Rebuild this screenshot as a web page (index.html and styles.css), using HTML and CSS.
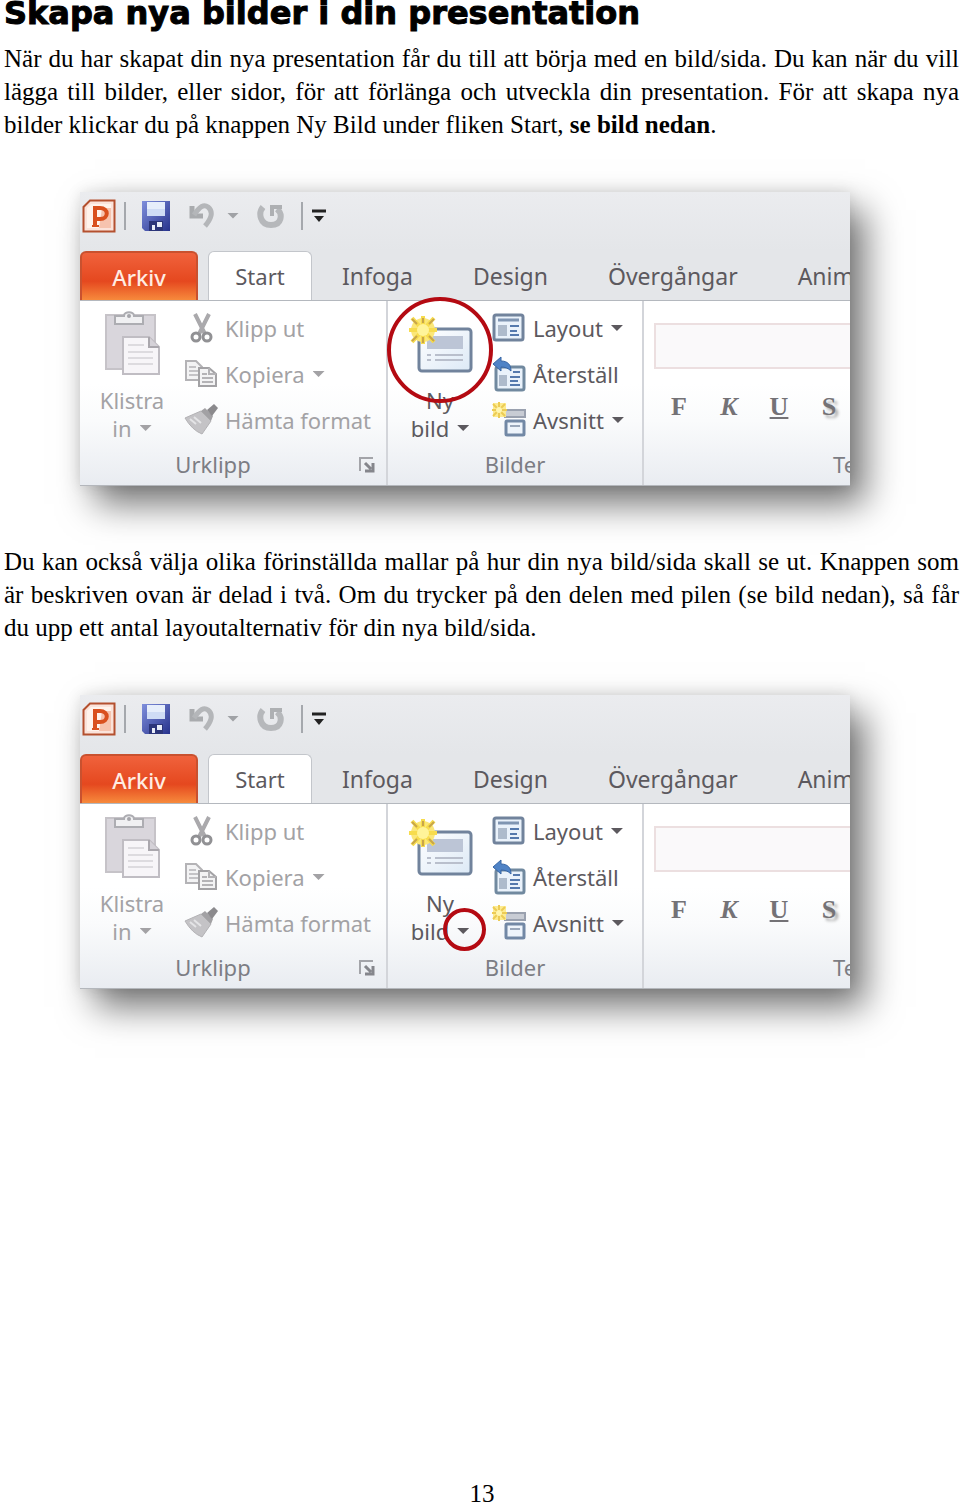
FILE: index.html
```html
<!DOCTYPE html>
<html lang="sv">
<head>
  <meta charset="UTF-8">
  <title>Skapa nya bilder i din presentation</title>
  <link rel="stylesheet" href="styles.css">
</head>
<body>
  <!-- Ikoner som delas av båda bilderna -->
  <svg class="sprite" aria-hidden="true">
    <defs>
      <linearGradient id="blue" x1="0" y1="0" x2="1" y2="1">
        <stop offset="0" stop-color="#7f8fdc"/><stop offset="1" stop-color="#27328c"/>
      </linearGradient>
      <linearGradient id="slide" x1="0" y1="0" x2="1" y2="1">
        <stop offset="0" stop-color="#ffffff"/><stop offset="1" stop-color="#dce9f6"/>
      </linearGradient>
    </defs>
    <symbol id="i-app" viewBox="0 0 34 34">
      <path d="M8 1.500H32.500V32.500H1.500V8Z" fill="#fbe3da" stroke="#b4502f" stroke-width="2"/>
      <path d="M9 5H29V29H5V9Z" fill="#fff3ec"/>
      <path d="M20 9H29V29H17Z" fill="#f6c3ae"/>
      <path d="M13 27V9H18C27 9 27 20 18 20H14" fill="none" stroke="#d9501e" stroke-width="4"/>
      <path d="M10 27H17" stroke="#d9501e" stroke-width="2"/>
    </symbol>
    <symbol id="i-save" viewBox="0 0 30 32">
      <path d="M1 1H29V31H4L1 28Z" fill="url(#blue)"/>
      <path d="M6 2H24V16H6Z" fill="#e6eefb"/>
      <path d="M6 9H24V16H6Z" fill="#cfdcf5"/>
      <path d="M8 21H22V31H8Z" fill="#2c3579"/>
      <path d="M11 25H14V30H11ZM16 22H21V27H16Z" fill="#e8ecf8"/>
    </symbol>
    <symbol id="i-undo" viewBox="0 0 26 28">
      <path d="M3 4V14H14" fill="none" stroke="#a9abae" stroke-width="5"/>
      <path d="M5 13C11 4 15 2 19 5C25 10 22 17 16 24" fill="none" stroke="#b4b6b9" stroke-width="5"/>
    </symbol>
    <symbol id="i-redo" viewBox="0 0 28 28">
      <path d="M6 5C1 11 3 23 14 23C25 23 26 12 20 7" fill="none" stroke="#b6b8bb" stroke-width="6"/>
      <path d="M15 14V5H25" fill="none" stroke="#aeb0b3" stroke-width="4"/>
    </symbol>
    <symbol id="i-more" viewBox="0 0 16 14">
      <path d="M1 2H15" stroke="#222" stroke-width="3"/><path d="M3 7H13L8 13Z" fill="#222"/>
    </symbol>
    <symbol id="i-paste" viewBox="0 0 58 66">
      <path d="M3 5H52V59H3Z" fill="#d9d6dc" stroke="#c6c3c8" stroke-width="2"/>
      <path d="M12 14V6H21C21 1 31 1 31 6H40V14Z" fill="#f0f0f2" stroke="#adadb2" stroke-width="2"/>
      <circle cx="26" cy="6" r="2" fill="#a5a5aa"/>
      <path d="M20 27H46L56 37V64H20Z" fill="#f7f5f8" stroke="#c0bdc3" stroke-width="2"/>
      <path d="M46 27V37H56" fill="#d5d2d8" stroke="#aaa7ad" stroke-width="2"/>
      <path d="M25 35H41M25 42H50M25 48H50M25 54H50" stroke="#dddbdf" stroke-width="2"/>
    </symbol>
    <symbol id="i-cut" viewBox="0 0 34 34">
      <path d="M11 3L21 23M25 3L15 23" stroke="#aaa9ac" stroke-width="4"/>
      <circle cx="12" cy="26" r="4" fill="none" stroke="#919194" stroke-width="3"/>
      <circle cx="23" cy="26" r="4" fill="none" stroke="#919194" stroke-width="3"/>
    </symbol>
    <symbol id="i-copy" viewBox="0 0 34 34">
      <path d="M2 4H12L18 10V23H2Z" fill="#f3f3f4" stroke="#b4b3b6" stroke-width="2"/>
      <path d="M5 10H12M5 14H14M5 18H14" stroke="#c4c3c6" stroke-width="2"/>
      <path d="M15 11H25L32 17V29H15Z" fill="#f3f3f4" stroke="#a3a2a5" stroke-width="2"/>
      <path d="M25 11V17H32M18 17H23M18 21H29M18 25H29" fill="none" stroke="#b4b3b6" stroke-width="2"/>
    </symbol>
    <symbol id="i-brush" viewBox="0 0 34 34">
      <path d="M1 15L17 8L27 18L18 31Q8 27 1 15Z" fill="#c4c3c6" stroke="#b3b2b5" stroke-width="1"/>
      <path d="M6 16L12 21M10 14L17 20" stroke="#e4e4e6" stroke-width="2"/>
      <path d="M17 8L21 5L29 13L27 18Z" fill="#a2a1a4"/>
      <path d="M23 7L30 1L34 5L28 13Z" fill="#8b8a8d"/>
    </symbol>
    <symbol id="i-new" viewBox="0 0 66 62">
      <rect x="12" y="15" width="52" height="42" rx="3" fill="url(#slide)" stroke="#71839c" stroke-width="3"/>
      <path d="M20 22H56V35H20Z" fill="#bcc5d6"/>
      <path d="M20 41H24M28 41H56M20 46H24M28 46H56" stroke="#b9bfcc" stroke-width="2"/>
      <circle cx="16" cy="16" r="12" fill="#fbe77a"/>
      <path d="M16 2V30M2 16H30M5 4L27 28M27 4L5 28" stroke="#f7dc4e" stroke-width="4"/>
      <path d="M16 4V9M5 5L10 10M27 5L22 10M16 23V29M5 27L10 22M27 27L22 22" stroke="#c8a54a" stroke-width="2"/>
      <circle cx="16" cy="16" r="6" fill="#fff49a"/>
    </symbol>
    <symbol id="i-layout" viewBox="0 0 34 30">
      <rect x="2" y="2" width="29" height="25" rx="2" fill="#eaf2fb" stroke="#71839c" stroke-width="3"/>
      <path d="M6 7H27" stroke="#7f95b2" stroke-width="3"/>
      <path d="M6 12H15V23H6Z" fill="#aebbcc"/>
      <path d="M18 13H27M18 18H25M18 22H27" stroke="#5579ad" stroke-width="2"/>
    </symbol>
    <symbol id="i-reset" viewBox="0 0 34 36">
      <rect x="4" y="11" width="28" height="23" rx="2" fill="#eaf2fb" stroke="#71899f" stroke-width="3"/>
      <path d="M7 19H15V30H7Z" fill="#aebbcc"/>
      <path d="M21 16H28M18 21H28M18 25H26M18 29H28" stroke="#5579ad" stroke-width="2"/>
      <path d="M1 8L9 1V5C16 5 19 9 19 15C16 12 13 11 9 11V15Z" fill="#4f83c6" stroke="#3866a5"/>
    </symbol>
    <symbol id="i-section" viewBox="0 0 34 36">
      <rect x="13" y="8" width="20" height="7" fill="#c8ccd4" stroke="#9aa1af" stroke-width="2"/>
      <rect x="14" y="19" width="18" height="14" rx="1" fill="#eef4fb" stroke="#7288a5" stroke-width="3"/>
      <path d="M18 24H28" stroke="#9aa7ba" stroke-width="2"/>
      <path d="M1 1H14V15H1Z" fill="#fdeb90"/>
      <path d="M7 0V16M0 8H15M1 2L13 14M13 2L1 14" stroke="#eccb55" stroke-width="2"/>
      <circle cx="7" cy="8" r="3" fill="#fff6b0"/>
    </symbol>
    <symbol id="i-launch" viewBox="0 0 18 18">
      <path d="M2 15V2H15" fill="none" stroke="#a3a4a9" stroke-width="2"/>
      <path d="M7 7L13 13M15 7V15H7" fill="none" stroke="#85868c" stroke-width="3"/>
    </symbol>
  </svg>

  <main>
    <h1>Skapa nya bilder i din presentation</h1>
    <p>När du har skapat din nya presentation får du till att börja med en bild/sida. Du kan när du vill lägga till bilder, eller sidor, för att förlänga och utveckla din presentation. För att skapa nya bilder klickar du på knappen Ny Bild under fliken Start, <b>se bild nedan</b>.</p>

    <figure class="ribbon">
      <div class="quick">
        <button class="app" aria-label="PowerPoint"><svg width="34" height="34"><use href="#i-app"/></svg></button>
        <span class="sep"></span>
        <button class="save" aria-label="Spara"><svg width="30" height="32"><use href="#i-save"/></svg></button>
        <button class="undo" aria-label="Ångra"><svg width="26" height="28"><use href="#i-undo"/></svg><i class="arrow"></i></button>
        <button class="redo" aria-label="Gör om"><svg width="28" height="28"><use href="#i-redo"/></svg></button>
        <span class="sep"></span>
        <button class="more" aria-label="Anpassa"><svg width="16" height="14"><use href="#i-more"/></svg></button>
      </div>
      <nav class="tabs">
        <button class="tab file">Arkiv</button>
        <button class="tab active">Start</button>
        <button class="tab">Infoga</button>
        <button class="tab">Design</button>
        <button class="tab">Övergångar</button>
        <button class="tab">Anim</button>
      </nav>
      <div class="groups">
        <section class="group clipboard">
          <div class="tools">
            <button class="big dim"><svg width="58" height="66"><use href="#i-paste"/></svg><span>Klistra</span><span>in<i class="arrow"></i></span></button>
            <div class="list dim">
              <button><svg width="34" height="34"><use href="#i-cut"/></svg>Klipp ut</button>
              <button><svg width="34" height="34"><use href="#i-copy"/></svg>Kopiera<i class="arrow"></i></button>
              <button><svg width="34" height="34"><use href="#i-brush"/></svg>Hämta format</button>
            </div>
          </div>
          <div class="name">Urklipp<button class="launch" aria-label="Visa Urklipp"><svg width="18" height="18"><use href="#i-launch"/></svg></button></div>
        </section>
        <section class="group slides">
          <div class="tools">
            <button class="big"><svg width="66" height="62"><use href="#i-new"/></svg><span>Ny</span><span>bild<i class="arrow"></i></span><span class="ring ring-icon"></span></button>
            <div class="list">
              <button><svg width="34" height="30"><use href="#i-layout"/></svg>Layout<i class="arrow"></i></button>
              <button><svg width="34" height="36"><use href="#i-reset"/></svg>Återställ</button>
              <button><svg width="34" height="36"><use href="#i-section"/></svg>Avsnitt<i class="arrow"></i></button>
            </div>
          </div>
          <div class="name">Bilder</div>
        </section>
        <section class="group font">
          <div class="tools">
            <input type="text" aria-label="Teckensnitt">
            <div class="format">
              <button><b>F</b></button>
              <button><em>K</em></button>
              <button><u>U</u></button>
              <button class="shadow">S</button>
            </div>
          </div>
          <div class="name">Te</div>
        </section>
      </div>
    </figure>

    <p>Du kan också välja olika förinställda mallar på hur din nya bild/sida skall se ut. Knappen som är beskriven ovan är delad i två. Om du trycker på den delen med pilen (se bild nedan), så får du upp ett antal layoutalternativ för din nya bild/sida.</p>

    <figure class="ribbon">
      <div class="quick">
        <button class="app" aria-label="PowerPoint"><svg width="34" height="34"><use href="#i-app"/></svg></button>
        <span class="sep"></span>
        <button class="save" aria-label="Spara"><svg width="30" height="32"><use href="#i-save"/></svg></button>
        <button class="undo" aria-label="Ångra"><svg width="26" height="28"><use href="#i-undo"/></svg><i class="arrow"></i></button>
        <button class="redo" aria-label="Gör om"><svg width="28" height="28"><use href="#i-redo"/></svg></button>
        <span class="sep"></span>
        <button class="more" aria-label="Anpassa"><svg width="16" height="14"><use href="#i-more"/></svg></button>
      </div>
      <nav class="tabs">
        <button class="tab file">Arkiv</button>
        <button class="tab active">Start</button>
        <button class="tab">Infoga</button>
        <button class="tab">Design</button>
        <button class="tab">Övergångar</button>
        <button class="tab">Anim</button>
      </nav>
      <div class="groups">
        <section class="group clipboard">
          <div class="tools">
            <button class="big dim"><svg width="58" height="66"><use href="#i-paste"/></svg><span>Klistra</span><span>in<i class="arrow"></i></span></button>
            <div class="list dim">
              <button><svg width="34" height="34"><use href="#i-cut"/></svg>Klipp ut</button>
              <button><svg width="34" height="34"><use href="#i-copy"/></svg>Kopiera<i class="arrow"></i></button>
              <button><svg width="34" height="34"><use href="#i-brush"/></svg>Hämta format</button>
            </div>
          </div>
          <div class="name">Urklipp<button class="launch" aria-label="Visa Urklipp"><svg width="18" height="18"><use href="#i-launch"/></svg></button></div>
        </section>
        <section class="group slides">
          <div class="tools">
            <button class="big"><svg width="66" height="62"><use href="#i-new"/></svg><span>Ny</span><span>bild<i class="arrow"></i></span><span class="ring ring-arrow"></span></button>
            <div class="list">
              <button><svg width="34" height="30"><use href="#i-layout"/></svg>Layout<i class="arrow"></i></button>
              <button><svg width="34" height="36"><use href="#i-reset"/></svg>Återställ</button>
              <button><svg width="34" height="36"><use href="#i-section"/></svg>Avsnitt<i class="arrow"></i></button>
            </div>
          </div>
          <div class="name">Bilder</div>
        </section>
        <section class="group font">
          <div class="tools">
            <input type="text" aria-label="Teckensnitt">
            <div class="format">
              <button><b>F</b></button>
              <button><em>K</em></button>
              <button><u>U</u></button>
              <button class="shadow">S</button>
            </div>
          </div>
          <div class="name">Te</div>
        </section>
      </div>
    </figure>
  </main>
  <footer>13</footer>
</body>
</html>
```
FILE: styles.css
```css
* {
  box-sizing: border-box;
}

body {
  display: flex;
  flex-direction: column;
  min-height: 100vh;
  margin: 0;
  padding: 0 1px 0 4px;
  background: #fff;
  color: #000;
  font-family: "Liberation Serif", "Times New Roman", serif;
  font-size: 25px;
  line-height: 33px;
}

.sprite {
  position: absolute;
  width: 0;
  height: 0;
}

h1 {
  margin: 0;
  padding-bottom: 16px;
  font-family: "Arial Black", "DejaVu Sans", sans-serif;
  font-size: 32px;
  font-weight: 900;
  line-height: 26px;
  -webkit-text-stroke: 1px #000;
}

p {
  margin: 0;
  text-align: justify;
}

footer {
  margin-top: auto;
  padding-left: 1px;
  text-align: center;
  line-height: 26px;
}

button {
  display: flex;
  align-items: center;
  padding: 0;
  border: none;
  background: none;
  color: inherit;
  font: inherit;
}

svg {
  display: block;
  flex: none;
}

/* menyfliksområdet */
.ribbon {
  margin: 51px 109px 59px 76px;
  background: #e4e6e9;
  box-shadow: 15px 18px 34px rgba(0, 0, 0, 0.55), 0 0 14px rgba(0, 0, 0, 0.1);
  color: #5c595e;
  font-family: "Noto Sans", "Segoe UI", sans-serif;
  font-size: 22px;
  line-height: 28px;
}

.quick {
  display: flex;
  align-items: center;
  height: 59px;
  padding: 0 2px 12px;
  background: linear-gradient(#ebecef, #e4e6e9);
}

.sep {
  width: 2px;
  height: 28px;
  background: #a5a8ad;
}

.app {
  margin-right: 8px;
}

.save {
  margin-left: 15px;
}

.undo {
  margin-left: 18px;
}

.redo {
  margin: 0 16px 0 18px;
}

.more {
  margin-left: 8px;
}

.arrow {
  flex: none;
  width: 12px;
  height: 6px;
  margin-left: 8px;
  background: currentColor;
  clip-path: polygon(0 0, 100% 0, 50% 100%);
}

.undo .arrow {
  margin-left: 12px;
  color: #a0a2a6;
}

.tabs {
  display: flex;
  height: 50px;
  overflow: hidden;
  border-bottom: 1px solid #b4b8be;
}

.tab {
  flex: none;
  padding: 0 30px;
  font-size: 23px;
}

.file,
.active {
  justify-content: center;
  padding: 0;
  border-radius: 6px 6px 0 0;
  font-size: 22px;
}

.file {
  width: 118px;
  margin-right: 10px;
  border: 2px solid #c9512f;
  border-bottom: none;
  background: linear-gradient(#f0623c, #e5481f 60%, #f78a3c);
  color: #ffece2;
  font-weight: 500;
}

.active {
  width: 104px;
  border: 1px solid #c3c6cb;
  border-bottom: none;
  background: #fff;
}

.groups {
  display: flex;
  height: 185px;
  background: linear-gradient(#fff 45%, #fafbfc 65%, #e9ecf1);
  border-bottom: 1px solid #b4b7bc;
}

.group {
  display: flex;
  flex-direction: column;
  flex: none;
  border-right: 2px solid #d3d5da;
}

.clipboard {
  width: 308px;
}

.slides {
  width: 256px;
}

.font {
  flex: 1;
  min-width: 0;
  overflow: hidden;
  border: none;
}

.tools {
  display: flex;
  height: 149px;
}

.dim {
  color: #a3a2a5;
}

.big {
  position: relative;
  flex-direction: column;
  justify-content: flex-end;
  width: 104px;
  padding-bottom: 8px;
}

.big svg {
  margin-bottom: 10px;
}

.big span {
  display: flex;
  align-items: center;
}

.list {
  display: flex;
  flex-direction: column;
  padding-top: 4px;
}

.list button {
  height: 46px;
}

.list svg {
  margin-right: 7px;
}

.name {
  position: relative;
  text-align: center;
  color: #7c7d84;
}

.clipboard .name {
  padding-right: 40px;
}

.launch {
  position: absolute;
  top: 6px;
  right: 10px;
}

.font .tools {
  display: block;
  padding: 22px 0 0 10px;
}

.font input {
  display: block;
  width: 100%;
  height: 46px;
  border: 2px solid #ecdfe0;
  border-right: none;
  background: #faf9fa;
}

.format {
  display: flex;
  margin-top: 24px;
  color: #747276;
  font-family: "Liberation Serif", serif;
  font-size: 26px;
  font-weight: bold;
}

.format button {
  flex: none;
  justify-content: center;
  width: 50px;
}

.shadow {
  text-shadow: 3px 3px 3px #aaa;
}

.font .name {
  padding-left: 189px;
  text-align: left;
}

/* röda markeringar */
.ring {
  position: absolute;
  border: 4px solid #b40a12;
  border-radius: 50%;
}

.ring-icon {
  top: -4px;
  left: -1px;
  width: 106px;
  height: 106px;
}

.ring-arrow {
  top: 104px;
  left: 55px;
  width: 43px;
  height: 43px;
}
```
